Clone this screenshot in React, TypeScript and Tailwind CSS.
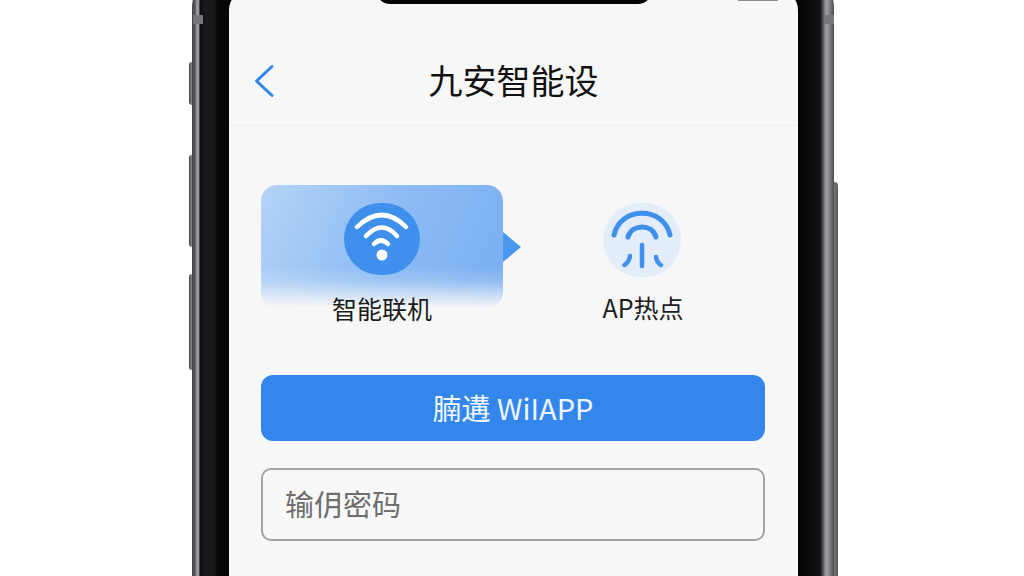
const cjk = { fontFamily: '"Noto Sans CJK SC", "Noto Sans", sans-serif' };

function WifiIcon() {
  return (
    <svg width="76" height="72" viewBox="0 0 76 72" fill="none" stroke="#fff" strokeLinecap="round">
      <path d="M13 24 Q 38 0, 62 24" strokeWidth="4.5" />
      <path d="M22 33 Q 38 16, 53 33" strokeWidth="4.5" />
      <path d="M30 41 Q 37 34, 44 41" strokeWidth="4.5" />
      <circle cx="38" cy="52" r="5.5" fill="#fff" stroke="none" />
    </svg>
  );
}

function HotspotIcon() {
  return (
    <svg width="78" height="74" viewBox="0 0 78 74" fill="none" stroke="#3f8fec" strokeLinecap="round">
      <path d="M11 32 C 17 3, 61 3, 67 32" strokeWidth="5" />
      <path d="M25 34 C 29 20.5, 49 20.5, 53 34" strokeWidth="5" />
      <path d="M39 42 L39 63" strokeWidth="4.5" />
      <path d="M27 53 C 26.5 57, 24.5 60, 21.5 62" strokeWidth="4.5" />
      <path d="M53 54 C 53.5 58, 55 60, 58 62" strokeWidth="4.5" />
    </svg>
  );
}

const sideBtn = 'w-[3px] rounded-l-sm bg-[linear-gradient(90deg,#444,#8c8d90)]';

export default function App() {
  return (
    <div className="w-[1024px] h-[576px] overflow-hidden bg-white" style={cjk}>
      <div className="relative ml-[192px] w-[642px] h-[640px] -mt-[32px] rounded-t-[40px] pl-[37px] pr-[36px] pt-[22px] bg-[linear-gradient(90deg,#444548_0px,#55565a_3px,#a2a3a6_5px,#8a8b8e_7px,#0c0c0c_8px,#1b1b1b_13px,#191919_22px,#050505_26px,#050505_610px,#131313_628px,#3a3a3c_630px,#a0a1a4_634px,#8a8b8e_637px,#4a4b4e_642px)]">
        <div className="absolute left-[-3px] top-[94px] flex flex-col">
          <div className={`${sideBtn} h-[43px]`} />
          <div className={`${sideBtn} mt-[50px] h-[92px]`} />
          <div className={`${sideBtn} mt-[27px] h-[96px]`} />
        </div>
        <div className="absolute right-[-4px] top-[214px] w-[4px] h-[400px] rounded-r-sm bg-[linear-gradient(90deg,#77787b,#55565a)]" />
        <div className="absolute left-[1px] top-[47px] w-[10px] h-[9px] bg-[#77787b]" />
        <div className="absolute right-0 top-[47px] w-[9px] h-[9px] bg-[#77787b]" />

        <div className="h-[618px] rounded-t-[20px] bg-[#f7f7f7]">
          <div className="-mb-[4px] flex h-[14px] items-start pl-[147px]">
            <div className="h-[14px] w-[276px] rounded-b-[14px] bg-[#050505]" />
            <div className="ml-[86px] mt-[10px] h-[1px] w-[40px] bg-[#8a8a8a]" />
          </div>
          <header className="relative flex h-[126px] items-center justify-center border-b border-[#efefef] pt-[34px]">
            <svg className="absolute left-[24px] top-[64px]" width="22" height="34" viewBox="0 0 22 34" fill="none" stroke="#2f86e6" strokeWidth="3" strokeLinecap="round" strokeLinejoin="round">
              <path d="M19 2.5 L3.5 17 L19 31.5" />
            </svg>
            <h1 className="text-[34px] leading-none font-normal text-[#111]">九安智能设</h1>
          </header>

          <div className="px-[32px] pt-[59px]">
            <div className="flex h-[123px]">
              <div className="relative flex h-[123px] w-[242px] flex-col items-center rounded-[16px] bg-[linear-gradient(180deg,rgba(247,247,247,0)_66%,rgba(247,247,247,0.2)_78%,rgba(247,247,247,0.65)_90%,#f7f7f7_100%),linear-gradient(115deg,#b5d3f7_0%,#8dbcf4_50%,#76adf1_100%)] pt-[18px]">
                <div className="flex h-[72px] w-[76px] shrink-0 items-center justify-center rounded-full bg-[#3f8fec]">
                  <WifiIcon />
                </div>
                <span className="mt-[16px] shrink-0 text-[25px] leading-[34px] text-[#1c1c1c] whitespace-nowrap">智能联机</span>
                <div className="absolute left-full top-[47px] h-0 w-0 border-y-[15px] border-l-[18px] border-y-transparent border-l-[#4b96ee]" />
              </div>
              <div className="ml-[100px] flex w-[80px] flex-col items-center pt-[18px]">
                <div className="-ml-[3px] flex h-[74px] w-[78px] shrink-0 items-center justify-center rounded-full bg-[#e3edf9]">
                  <HotspotIcon />
                </div>
                <span className="mt-[13px] shrink-0 text-[25px] leading-[34px] text-[#1c1c1c] whitespace-nowrap">AP热点</span>
              </div>
            </div>

            <button className="mt-[67px] flex h-[66px] w-[504px] items-center justify-center rounded-[12px] bg-[#3387ec] text-[29px] text-[#eef5fe]">
              腩遘 WiIAPP
            </button>
            <div className="mt-[27px] flex h-[73px] w-[504px] items-center rounded-[10px] border-2 border-[#a3a3a3] bg-[#f8f8f8] px-[22px] pb-[2px] text-[29px] text-[#6e6e6e]">
              输仴密码
            </div>
          </div>
        </div>
      </div>
    </div>
  );
}
